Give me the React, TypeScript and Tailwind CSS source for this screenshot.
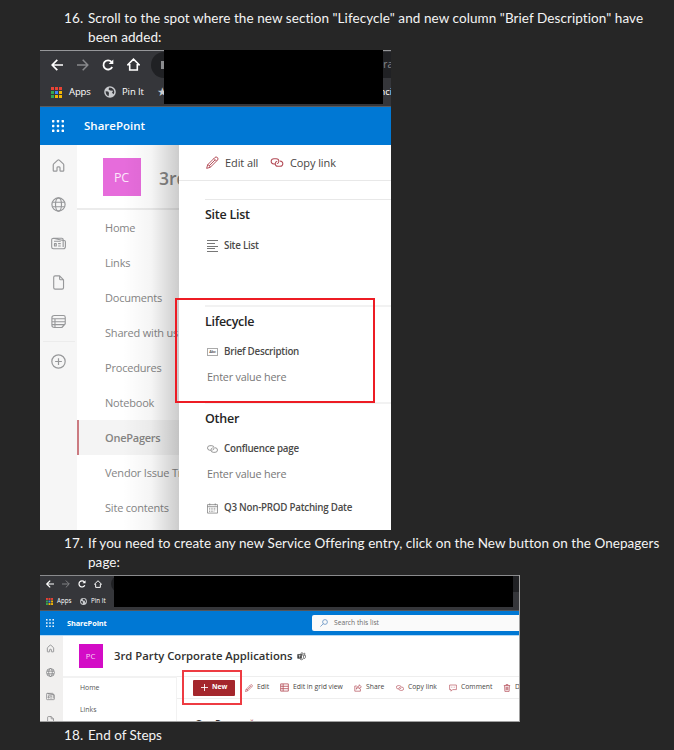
import type { ReactNode } from "react";

type IconProps = { className?: string };

function Svg({ className = "", box = "0 0 20 20", w = 1, children }: { className?: string; box?: string; w?: number; children: ReactNode }) {
  return (
    <svg viewBox={box} className={`shrink-0 ${className}`} fill="none" stroke="currentColor" strokeWidth={w} strokeLinejoin="round">
      {children}
    </svg>
  );
}

const HomeIcon = ({ className }: IconProps) => (
  <Svg className={className} w={1.6}>
    <path d="M3 9.2Q3 8.4 3.6 7.8L9 2.8Q10 2 11 2.8L16.4 7.8Q17 8.4 17 9.2V16.5Q17 17.5 16 17.5H13Q12 17.5 12 16.5V13Q12 11.8 10.8 11.8H9.2Q8 11.8 8 13V16.5Q8 17.5 7 17.5H4Q3 17.5 3 16.5Z" />
  </Svg>
);
const GlobeIcon = ({ className }: IconProps) => (
  <Svg className={className} w={1.6}>
    <circle cx="10" cy="10" r="8.8" />
    <ellipse cx="10" cy="10" rx="4" ry="8.8" />
    <path d="M2.2 7h15.6M2.2 13h15.6" />
  </Svg>
);
const NewsIcon = ({ className }: IconProps) => (
  <Svg className={className} w={1.5}>
    <path d="M3.2 3H14.5Q16.2 3 16.2 4.8V14.5M16.2 6H17.5Q19.2 6 19.2 7.8V14Q19.2 17 16.5 17H3.2Q.9 17 .9 14.8V5Q.9 3 3.2 3Z" />
    <path d="M4 7h9M9.5 10.2H13M9.5 13.3H13M4.6 10.2H7V13.3H4.6Z" />
  </Svg>
);
const FileIcon = ({ className }: IconProps) => (
  <Svg className={className} w={1.5}>
    <path d="M5.5 1.2H11.5L16.7 6.4V17Q16.7 18.8 14.8 18.8H5.5Q3.6 18.8 3.6 17V3Q3.6 1.2 5.5 1.2ZM11.5 1.2V5Q11.5 6.4 12.8 6.4H16.7" />
  </Svg>
);
const ListIcon = ({ className }: IconProps) => (
  <Svg className={className} w={1.5}>
    <path d="M4.5 2H16.5Q19 2 19 4.5V13L14.5 18H4.5Q1.2 18 1.2 15V5Q1.2 2 4.5 2ZM1.2 6.3H19M1.2 10.3H19M1.2 14.2H18M5.3 6.3V18" />
  </Svg>
);
const PlusCircleIcon = ({ className }: IconProps) => (
  <Svg className={className} w={1.6}>
    <circle cx="10" cy="10" r="8.9" />
    <path d="M10 5.5v9M5.5 10h9" />
  </Svg>
);
const PencilIcon = ({ className }: IconProps) => (
  <Svg className={className} w={1.5}>
    <path d="M1 19L2.6 13.4L13.8 2.2Q15.4 .6 17.6 2.4Q19.4 4.6 17.8 6.2L6.6 17.4ZM2.6 13.4Q6 13.8 6.6 17.4M12.2 3.8L16.2 7.8M5 15L13.8 6.2" />
  </Svg>
);
const LinkIcon = ({ className }: IconProps) => (
  <Svg className={className} box="0 0 20 14" w={1.6}>
    <path d="M7 9.3H5Q.9 9 .9 5Q1.1 1 5.3 1H8.8Q12.9 1.2 12.9 5Q12.8 8.5 9.8 9.1" />
    <path d="M14.5 4.6Q19.1 5 19.1 8.9Q18.9 13 14.8 13H11.3Q7.2 12.8 7.2 8.9Q7.3 5.5 10.3 4.9" />
  </Svg>
);
const LinesIcon = ({ className }: IconProps) => (
  <Svg className={className} box="0 0 11 12">
    <path d="M0 .5H11M0 3.5H8M0 6.5H11M0 8.5H8M0 11.5H11" />
  </Svg>
);
const CalendarIcon = ({ className }: IconProps) => (
  <Svg className={className} box="0 0 12 11" w={0.8}>
    <path d="M.5 1.3H11.5V10.5H.5ZM.5 3.5H11.5M3 0V2M9 0V2" />
    <path d="M2.3 5.3H10M2.3 7H10M2.3 8.7H8" strokeDasharray="1 .8" />
  </Svg>
);
const GridIcon = ({ className }: IconProps) => (
  <Svg className={className} w={1.8}>
    <path d="M1.5 2H18.5V18H1.5ZM1.5 7.3H18.5M1.5 12.6H18.5M7 2V18" />
  </Svg>
);
const ShareIcon = ({ className }: IconProps) => (
  <Svg className={className} w={1.7}>
    <path d="M7 5H2V18H16V12M13 2L18.5 7L13 12V9Q8 9 5.5 13Q6.5 5.5 13 5Z" />
  </Svg>
);
const CommentIcon = ({ className }: IconProps) => (
  <Svg className={className} w={1.6}>
    <path d="M1.5 2.5H18.5V14H9L5 18V14H1.5ZM5.5 8H7M9.3 8H10.8M13 8H14.5" />
  </Svg>
);
const TrashIcon = ({ className }: IconProps) => (
  <Svg className={className} w={1.8}>
    <path d="M2 4H18M7.5 4V1.5H12.5V4M4 4L4.7 18.5H15.3L16 4M7.8 7V15.5M10 7V15.5M12.2 7V15.5" />
  </Svg>
);
const SearchIcon = ({ className }: IconProps) => (
  <Svg className={className} w={1.8}>
    <circle cx="12.5" cy="7.5" r="6" />
    <path d="M8.3 11.7L1 19" />
  </Svg>
);
const TeamsIcon = ({ className }: IconProps) => (
  <Svg className={className} w={1.5}>
    <rect x="1.5" y="5.5" width="8.5" height="8.5" fill="currentColor" />
    <path d="M3.8 8H7.8M5.8 8V12.3" stroke="#fff" />
    <circle cx="11" cy="3.6" r="2.1" />
    <circle cx="16.5" cy="4.4" r="1.5" />
    <path d="M12 7.5H14.5V13Q14 17 10 17.2Q7.5 17 6.5 15.5M16 7.7H18.8V12Q18.3 14.5 15.5 14.6" />
  </Svg>
);
const BackIcon = ({ className }: IconProps) => (
  <Svg className={className} box="0 0 12 12" w={1.7}>
    <path d="M12 6H1.3M6.3 .8L1.1 6L6.3 11.2" />
  </Svg>
);
const ForwardIcon = ({ className }: IconProps) => (
  <Svg className={className} box="0 0 12 12" w={1.5}>
    <path d="M0 6H10.7M5.7 .8L10.9 6L5.7 11.2" />
  </Svg>
);
const ReloadIcon = ({ className }: IconProps) => (
  <Svg className={className} box="0 0 12 12" w={1.8}>
    <path d="M10.2 8A4.6 4.6 0 1 1 9.5 2.8" />
    <path d="M11.3 .4V5H6.7Z" fill="currentColor" stroke="none" />
  </Svg>
);
const BrowserHomeIcon = ({ className }: IconProps) => (
  <Svg className={className} box="0 0 13 13" w={1.6}>
    <path d="M.8 6.8L6.5 1.2L12.2 6.8H10.3V12H2.7V6.8Z" strokeLinejoin="miter" />
  </Svg>
);
const PinGlobeIcon = ({ className }: IconProps) => (
  <svg viewBox="0 0 12 12" className={`shrink-0 ${className}`}>
    <circle cx="6" cy="6" r="5.8" fill="#c9cbce" />
    <path d="M1.6 5.2L4.2 5.6L5 7L4.6 10.3Q1.7 9.2 1.6 5.2ZM5.4 1.4L4.4 3.2L6 4.6L9.2 4.8L8 6.8L9.6 8.2Q11 6 9.6 3.6Q8 1.5 5.4 1.4Z" fill="#35363a" />
  </svg>
);

const appColors = ["#e94335", "#e94335", "#e94335", "#33a852", "#4285f4", "#f2b705", "#33a852", "#f2b705", "#f2b705"];
function AppsIcon({ className }: IconProps) {
  return (
    <svg viewBox="0 0 11 11" className={`shrink-0 ${className}`}>
      {appColors.map((c, i) => (
        <rect key={i} x={(i % 3) * 4} y={Math.floor(i / 3) * 4} width="3" height="3" fill={c} />
      ))}
    </svg>
  );
}
function WaffleIcon({ className }: IconProps) {
  return (
    <svg viewBox="0 0 12 12" className={`shrink-0 ${className}`} fill="#fff">
      {[0, 1, 2, 3, 4, 5, 6, 7, 8].map((i) => (
        <rect key={i} x={(i % 3) * 4.8} y={Math.floor(i / 3) * 4.8} width="2.4" height="2.4" rx=".6" />
      ))}
    </svg>
  );
}

function Step({ n, children, className = "" }: { n: number; children: ReactNode; className?: string }) {
  return (
    <div className={`flex pl-16 font-[Lato,sans-serif] text-[13.5px] leading-[19px] text-[#f4f4f4] ${className}`}>
      <span className="w-6 shrink-0 tracking-[0.1px]">{n}.</span>
      <div className="whitespace-nowrap">{children}</div>
    </div>
  );
}

const navItems = ["Home", "Links", "Documents", "Shared with us", "Procedures", "Notebook", "OnePagers", "Vendor Issue Tracker", "Site contents"];

function Field({ icon, label, className = "" }: { icon: ReactNode; label: string; className?: string }) {
  return (
    <div className={`flex h-4 items-center gap-[6px] pl-[2px] text-[9.8px] font-semibold tracking-[-0.26px] text-[#4b4a49] ${className}`}>
      {icon}
      <span>{label}</span>
    </div>
  );
}

function PanelShot() {
  return (
    <div className="relative ml-10 flex h-[480px] w-[351px] flex-col overflow-hidden bg-white whitespace-nowrap">
      <div className="relative h-[57px] border-t border-b border-t-[#96979a] border-b-[#5b5c5f] bg-[#35363a] text-white">
        <div className="flex h-[27px] items-center pl-[11px]">
          <BackIcon className="h-3 w-3" />
          <ForwardIcon className="ml-[14px] h-3 w-3 text-[#88898c]" />
          <ReloadIcon className="ml-[13px] h-3 w-3" />
          <BrowserHomeIcon className="ml-[13px] h-[13px] w-[13px]" />
          <div className="ml-[11px] flex h-[26px] flex-1 items-center justify-between rounded-l-full bg-[#202124] pl-[10px] text-[10px] text-[#8a8b8e]">
            <span className="h-2 w-1 bg-[#8a8b8e]" />
            <span className="-mr-[2px]">ora</span>
          </div>
        </div>
        <div className="flex h-7 items-center pl-[11px] text-[9.5px] tracking-[-0.1px]">
          <AppsIcon className="h-[11px] w-[11px]" />
          <span className="ml-[7px] w-[35px]">Apps</span>
          <PinGlobeIcon className="h-3 w-3" />
          <span className="ml-[6px] w-[35px]">Pin It</span>
          <span className="text-[12px] text-[#c9cbce]">★</span>
          <span className="-mr-px ml-auto">nci</span>
        </div>
        <div className="absolute -top-px left-[124px] h-[54px] w-[219px] bg-black" />
      </div>
      <div className="flex h-[38px] items-center bg-[#0078d4] pl-3 text-white">
        <WaffleIcon className="h-3 w-3" />
        <span className="ml-5 text-[11.5px] font-semibold">SharePoint</span>
      </div>
      <div className="flex flex-1">
        <div className="flex w-[37px] flex-col items-center bg-[#f6f6f6] pt-[13px] text-[#97989a]">
          <div className="flex flex-col gap-6">
            <HomeIcon className="h-[15px] w-[15px]" />
            <GlobeIcon className="h-[15px] w-[15px]" />
            <NewsIcon className="h-[15px] w-[15px]" />
            <FileIcon className="h-[15px] w-[15px]" />
            <ListIcon className="h-[15px] w-[15px]" />
          </div>
          <div className="mt-[12px] h-px w-8 bg-[#ececec]" />
          <PlusCircleIcon className="mt-[12px] h-[15px] w-[15px]" />
        </div>
        <div className="relative w-[102px] overflow-hidden bg-white">
          <div className="flex h-[65px] items-center border-b-2 border-[#ececec] pl-[26px]">
            <div className="flex h-[38px] w-[38px] shrink-0 items-center justify-center bg-[#e66cdb] pt-[3px] pr-px text-[12.5px] tracking-[-0.2px] text-[#fce8fa]">PC</div>
            <span className="ml-[18px] pt-[3px] text-[17.5px] font-semibold text-[#8a8988]">3rd</span>
          </div>
          {navItems.map((t) => (
            <div
              key={t}
              className={`flex h-[35px] items-center pt-[2px] text-[11px] ${t === "OnePagers" ? "border-l-2 border-l-[#cb7b81] bg-[#f4f4f4] pl-[26px] font-semibold tracking-[-0.25px] text-[#858483]" : "pl-[28px] tracking-[-0.2px] text-[#858585]"}`}
            >
              {t}
            </div>
          ))}
          <div className="absolute inset-y-0 right-0 w-14 bg-linear-to-r from-transparent via-black/[0.04] to-black/[0.2]" />
        </div>
        <div className="flex flex-1 flex-col bg-white text-[#242424]">
          <div className="flex h-9 items-center border-b border-[#e8e8e8] pl-[27px] text-[11px] text-[#484644]">
            <PencilIcon className="h-[13px] w-[13px] text-[#b34b56]" />
            <span className="ml-[6px] w-[45px] pt-px tracking-[-0.1px]">Edit all</span>
            <LinkIcon className="h-[9px] w-[14px] text-[#b34b56]" />
            <span className="ml-[6px] pt-px tracking-[-0.1px]">Copy link</span>
          </div>
          <div className="mt-[18px] ml-[26px] h-[106px] border-t border-[#e8e8e8] pt-[6px]">
            <div className="h-[18px] text-[12.5px] leading-[18px] font-semibold tracking-[-0.25px]">Site List</div>
            <Field icon={<LinesIcon className="h-3 w-[11px] text-[#777]" />} label="Site List" className="mt-[14px]" />
          </div>
          <div className="ml-[26px] h-[97px] border-t-2 border-[#f2f2f2] pt-[6px]">
            <div className="h-[18px] text-[12.5px] leading-[18px] font-semibold tracking-[-0.3px]">Lifecycle</div>
            <Field
              icon={<span className="flex h-2 w-[11px] items-center justify-center border border-[#aaa] text-[4px] leading-none">Abc</span>}
              label="Brief Description"
              className="mt-[13px]"
            />
            <div className="mt-[9px] pl-[2px] text-[10.8px] leading-4 tracking-[-0.2px] text-[#777]">Enter value here</div>
          </div>
          <div className="ml-[26px] border-t-2 border-[#f2f2f2] pt-[6px]">
            <div className="h-[18px] text-[12.5px] leading-[18px] font-semibold tracking-[-0.25px]">Other</div>
            <Field icon={<LinkIcon className="h-2 w-[11px] text-[#888]" />} label="Confluence page" className="mt-[13px]" />
            <div className="mt-[9px] pl-[2px] text-[10.8px] leading-4 tracking-[-0.2px] text-[#777]">Enter value here</div>
            <Field icon={<CalendarIcon className="h-[11px] w-[11px] text-[#777]" />} label="Q3 Non-PROD Patching Date" className="mt-[18px]" />
          </div>
        </div>
      </div>
      <div className="absolute top-[248px] left-[135px] h-[105px] w-[200px] border-2 border-[#ed1c24]" />
    </div>
  );
}

function Command({ icon, label, className }: { icon: ReactNode; label: string; className: string }) {
  return (
    <div className={`flex shrink-0 items-center gap-[4px] text-[#b34b56] ${className}`}>
      {icon}
      <span className="text-[6.8px] text-[#484644]">{label}</span>
    </div>
  );
}

function ListShot() {
  return (
    <div className="relative ml-10 flex h-[147px] w-[480px] flex-col overflow-hidden border-r border-b border-[#a0a0a0] bg-white whitespace-nowrap">
      <div className="relative h-9 border-t border-b border-t-[#8a8b8d] border-b-[#55565a] bg-[#35363a] text-white">
        <div className="flex h-4 items-center pl-[6px]">
          <BackIcon className="h-2 w-2" />
          <ForwardIcon className="ml-[8px] h-2 w-2 text-[#808184]" />
          <ReloadIcon className="ml-[8px] h-2 w-2" />
          <BrowserHomeIcon className="ml-[8px] h-2 w-2" />
          <div className="ml-[9px] h-4 flex-1 rounded-l-full bg-[#202124]" />
        </div>
        <div className="flex h-[18px] items-center pl-[6px] text-[6.2px]">
          <AppsIcon className="h-[7px] w-[7px]" />
          <span className="ml-[4px] w-[23px]">Apps</span>
          <PinGlobeIcon className="h-[7px] w-[7px]" />
          <span className="ml-[4px]">Pin It</span>
        </div>
        <div className="absolute top-0 left-[74px] h-[31px] w-[399px] bg-black" />
      </div>
      <div className="flex h-[25px] items-center border-b border-[#b5d8f3] bg-[#0078d4] pl-[6px] text-white">
        <WaffleIcon className="h-2 w-2" />
        <span className="ml-[13px] pt-px text-[7.4px] font-bold tracking-[-0.1px]">SharePoint</span>
        <div className="ml-auto flex h-4 w-[207px] items-center rounded-l-xs bg-[#fafafa] pl-2">
          <SearchIcon className="h-2 w-2 text-[#5487bd]" />
          <span className="ml-[6px] pt-px text-[6.7px] text-[#6b6b6b]">Search this list</span>
        </div>
      </div>
      <div className="flex min-h-0 flex-1">
        <div className="flex w-[23px] flex-col items-center gap-[15px] bg-[#f1f0ef] pr-[2px] pt-[8px] text-[#77787a]">
          <HomeIcon className="h-[9px] w-[9px]" />
          <GlobeIcon className="h-[9px] w-[9px]" />
          <NewsIcon className="h-[9px] w-[9px]" />
          <FileIcon className="h-[9px] w-[9px]" />
        </div>
        <div className="flex min-w-0 flex-1 flex-col">
          <div className="flex h-10 shrink-0 items-center pl-4">
            <div className="flex h-6 w-6 items-center justify-center bg-[#d30cc6] pt-px pr-px text-[7.8px] text-[#f7d5f4]">PC</div>
            <span className="ml-[11px] pt-px text-[11.3px] font-semibold text-[#323130]">3rd Party Corporate Applications</span>
            <TeamsIcon className="ml-[4px] h-[9px] w-[9px] text-[#444]" />
          </div>
          <div className="flex min-h-0 flex-1">
            <div className="w-[114px] shrink-0 border-t-2 border-r border-[#f2f2f2] pt-0 pl-[17px] text-[6.9px] text-[#555]">
              <div className="flex h-[21px] items-center">Home</div>
              <div className="flex h-[23px] items-center">Links</div>
            </div>
            <div className="min-w-0 flex-1">
              <div className="flex h-[23px] items-center border-t border-b border-[#eeeeee] pl-4">
                <div className="flex h-4 w-[42px] shrink-0 items-center rounded-[1px] bg-[#a4262c] pl-[8px] text-[6.8px] font-bold text-white">
                  <Svg className="mr-[4px] h-[7px] w-[7px]" box="0 0 8 8">
                    <path d="M4 0V8M0 4H8" />
                  </Svg>
                  New
                </div>
                <Command className="ml-[10px] w-[35px]" icon={<PencilIcon className="h-2 w-2" />} label="Edit" />
                <Command className="w-[74px]" icon={<GridIcon className="h-[9px] w-[9px]" />} label="Edit in grid view" />
                <Command className="w-[42px]" icon={<ShareIcon className="h-2 w-2" />} label="Share" />
                <Command className="w-[53px]" icon={<LinkIcon className="h-[6px] w-2" />} label="Copy link" />
                <Command className="w-[54px]" icon={<CommentIcon className="h-2 w-2" />} label="Comment" />
                <Command className="w-[50px]" icon={<TrashIcon className="h-2 w-2" />} label="Delete" />
              </div>
              <div className="mt-[18px] flex pl-[18px] text-[10px] leading-[14px] font-semibold text-[#323130]">
                OnePagers<span className="ml-[3px] text-[#a4262c]">˅</span>
              </div>
            </div>
          </div>
        </div>
      </div>
      <div className="absolute top-[95px] left-[142px] h-[35px] w-[60px] border-2 border-[#ee3b42]" />
    </div>
  );
}

export default function App() {
  return (
    <div className="h-[750px] w-[674px] overflow-hidden bg-[#262626] pt-[9px] font-['Open_Sans','Noto_Sans',sans-serif]">
      <Step n={16} className="h-[41px] tracking-[0.07px]">
        Scroll to the spot where the new section "Lifecycle" and new column "Brief Description" have
        <br />
        been added:
      </Step>
      <PanelShot />
      <Step n={17} className="h-[45px] pt-[4px] tracking-[0.05px]">
        If you need to create any new Service Offering entry, click on the New button on the Onepagers
        <br />
        page:
      </Step>
      <ListShot />
      <Step n={18} className="pt-[4px]">End of Steps</Step>
    </div>
  );
}
